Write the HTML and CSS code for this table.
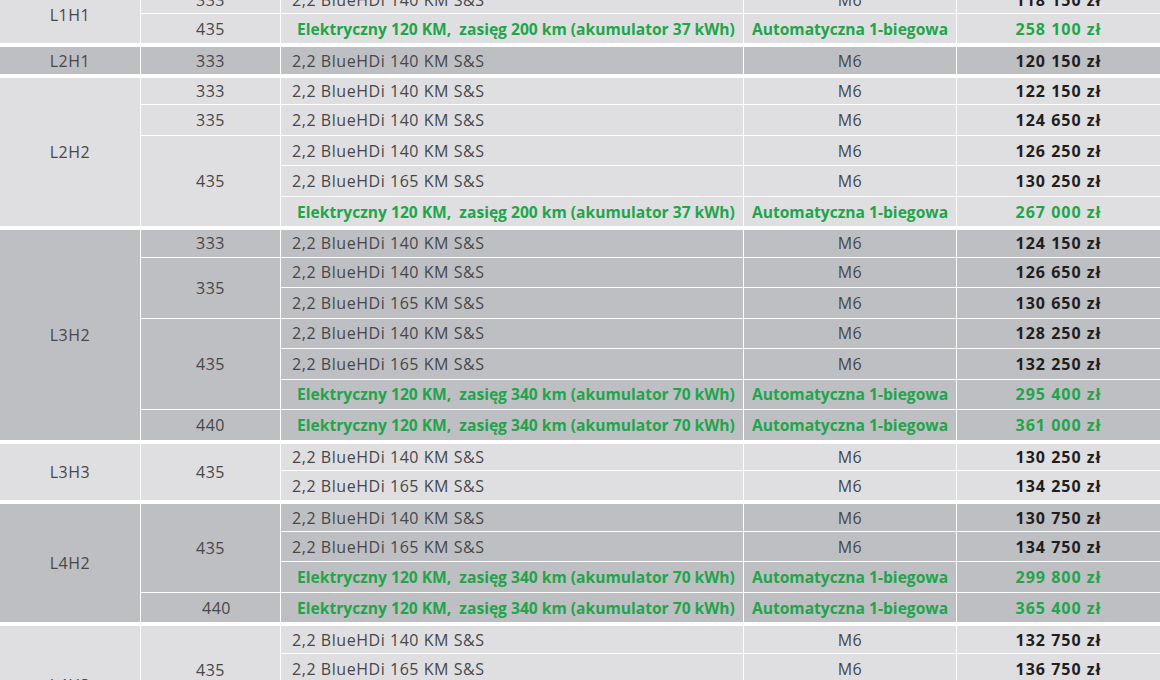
FILE: index.html
```html
<!DOCTYPE html>
<html lang="pl">
<head>
<meta charset="utf-8">
<title>Cennik</title>
<link rel="stylesheet" href="styles.css">
</head>
<body>
<table class="price-table">
  <colgroup>
    <col class="c-model"><col class="c-wb"><col class="c-engine"><col class="c-gear"><col class="c-price">
  </colgroup>
  <tbody class="grp light">
    <tr><td class="model" rowspan="2">L1H1</td><td class="wb">333</td><td class="engine">2,2 BlueHDi 140 KM S&amp;S</td><td class="gear">M6</td><td class="price">118 150 zł</td></tr>
    <tr><td class="wb">435</td><td class="engine ev">Elektryczny 120 KM,&nbsp; zasięg 200 km (akumulator 37 kWh)</td><td class="gear ev">Automatyczna 1-biegowa</td><td class="price ev">258 100 zł</td></tr>
  </tbody>
  <tbody class="grp dark">
    <tr><td class="model">L2H1</td><td class="wb">333</td><td class="engine">2,2 BlueHDi 140 KM S&amp;S</td><td class="gear">M6</td><td class="price">120 150 zł</td></tr>
  </tbody>
  <tbody class="grp light">
    <tr><td class="model" rowspan="5">L2H2</td><td class="wb">333</td><td class="engine">2,2 BlueHDi 140 KM S&amp;S</td><td class="gear">M6</td><td class="price">122 150 zł</td></tr>
    <tr><td class="wb">335</td><td class="engine">2,2 BlueHDi 140 KM S&amp;S</td><td class="gear">M6</td><td class="price">124 650 zł</td></tr>
    <tr><td class="wb" rowspan="3">435</td><td class="engine">2,2 BlueHDi 140 KM S&amp;S</td><td class="gear">M6</td><td class="price">126 250 zł</td></tr>
    <tr><td class="engine">2,2 BlueHDi 165 KM S&amp;S</td><td class="gear">M6</td><td class="price">130 250 zł</td></tr>
    <tr><td class="engine ev">Elektryczny 120 KM,&nbsp; zasięg 200 km (akumulator 37 kWh)</td><td class="gear ev">Automatyczna 1-biegowa</td><td class="price ev">267 000 zł</td></tr>
  </tbody>
  <tbody class="grp dark">
    <tr><td class="model" rowspan="7">L3H2</td><td class="wb">333</td><td class="engine">2,2 BlueHDi 140 KM S&amp;S</td><td class="gear">M6</td><td class="price">124 150 zł</td></tr>
    <tr><td class="wb" rowspan="2">335</td><td class="engine">2,2 BlueHDi 140 KM S&amp;S</td><td class="gear">M6</td><td class="price">126 650 zł</td></tr>
    <tr><td class="engine">2,2 BlueHDi 165 KM S&amp;S</td><td class="gear">M6</td><td class="price">130 650 zł</td></tr>
    <tr><td class="wb" rowspan="3">435</td><td class="engine">2,2 BlueHDi 140 KM S&amp;S</td><td class="gear">M6</td><td class="price">128 250 zł</td></tr>
    <tr><td class="engine">2,2 BlueHDi 165 KM S&amp;S</td><td class="gear">M6</td><td class="price">132 250 zł</td></tr>
    <tr><td class="engine ev">Elektryczny 120 KM,&nbsp; zasięg 340 km (akumulator 70 kWh)</td><td class="gear ev">Automatyczna 1-biegowa</td><td class="price ev">295 400 zł</td></tr>
    <tr><td class="wb">440</td><td class="engine ev">Elektryczny 120 KM,&nbsp; zasięg 340 km (akumulator 70 kWh)</td><td class="gear ev">Automatyczna 1-biegowa</td><td class="price ev">361 000 zł</td></tr>
  </tbody>
  <tbody class="grp light">
    <tr><td class="model" rowspan="2">L3H3</td><td class="wb" rowspan="2">435</td><td class="engine">2,2 BlueHDi 140 KM S&amp;S</td><td class="gear">M6</td><td class="price">130 250 zł</td></tr>
    <tr><td class="engine">2,2 BlueHDi 165 KM S&amp;S</td><td class="gear">M6</td><td class="price">134 250 zł</td></tr>
  </tbody>
  <tbody class="grp dark">
    <tr><td class="model" rowspan="4">L4H2</td><td class="wb" rowspan="3">435</td><td class="engine">2,2 BlueHDi 140 KM S&amp;S</td><td class="gear">M6</td><td class="price">130 750 zł</td></tr>
    <tr><td class="engine">2,2 BlueHDi 165 KM S&amp;S</td><td class="gear">M6</td><td class="price">134 750 zł</td></tr>
    <tr><td class="engine ev">Elektryczny 120 KM,&nbsp; zasięg 340 km (akumulator 70 kWh)</td><td class="gear ev">Automatyczna 1-biegowa</td><td class="price ev">299 800 zł</td></tr>
    <tr><td class="wb wb-shift">440</td><td class="engine ev">Elektryczny 120 KM,&nbsp; zasięg 340 km (akumulator 70 kWh)</td><td class="gear ev">Automatyczna 1-biegowa</td><td class="price ev">365 400 zł</td></tr>
  </tbody>
  <tbody class="grp light">
    <tr><td class="model" rowspan="4">L4H3</td><td class="wb" rowspan="3">435</td><td class="engine">2,2 BlueHDi 140 KM S&amp;S</td><td class="gear">M6</td><td class="price">132 750 zł</td></tr>
    <tr><td class="engine">2,2 BlueHDi 165 KM S&amp;S</td><td class="gear">M6</td><td class="price">136 750 zł</td></tr>
    <tr><td class="engine ev">Elektryczny 120 KM,&nbsp; zasięg 340 km (akumulator 70 kWh)</td><td class="gear ev">Automatyczna 1-biegowa</td><td class="price ev">303 200 zł</td></tr>
    <tr><td class="wb">440</td><td class="engine ev">Elektryczny 120 KM,&nbsp; zasięg 340 km (akumulator 70 kWh)</td><td class="gear ev">Automatyczna 1-biegowa</td><td class="price ev">368 800 zł</td></tr>
  </tbody>
</table>
</body>
</html>
```

FILE: styles.css
```css
html, body {
  margin: 0;
  padding: 0;
  background: #ffffff;
  overflow: hidden;
}

body {
  font-family: "Open Sans", "Liberation Sans", sans-serif;
  font-size: 16px;
  letter-spacing: 0.55px;
  color: #47474a;
}

.price-table {
  border-collapse: separate;
  border-spacing: 0;
  table-layout: fixed;
  width: 1160px;
  margin-top: -17.5px;
}

.c-model { width: 140px; }
.c-wb { width: 140px; }
.c-engine { width: 463px; }
.c-gear { width: 213px; }
.c-price { width: 204px; }

.price-table tr {
  height: 30.48px;
}

.price-table td {
  padding: 0;
  border-top: 1px solid #ffffff;
  border-left: 1px solid #ffffff;
  text-align: center;
  vertical-align: middle;
  white-space: nowrap;
  overflow: hidden;
  line-height: 20px;
}

.price-table td.model {
  border-left: none;
}

.grp > tr:first-child > td {
  border-top: 4px solid #ffffff;
}

.light td { background: #dfdfe1; }
.dark td { background: #bebfc2; }

.engine {
  text-align: left !important;
  padding-left: 11px !important;
}

.engine.ev {
  text-align: center !important;
  padding-left: 8px !important;
}

.price {
  font-weight: 700;
  color: #1e1e20;
  letter-spacing: 1px;
}

.ev {
  font-weight: 700;
  font-size: 15.6px;
  letter-spacing: 0;
  color: #1fa54b;
}

.price.ev {
  font-size: 16px;
  letter-spacing: 1px;
  color: #1fa54b;
}

.wb-shift {
  padding-left: 12px !important;
}
```
